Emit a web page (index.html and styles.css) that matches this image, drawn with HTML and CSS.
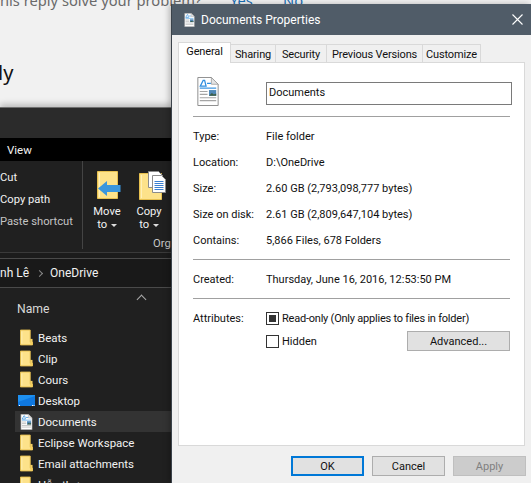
FILE: index.html
```html
<!DOCTYPE html>
<html lang="en">
<head>
<meta charset="utf-8">
<title>Documents Properties</title>
<link rel="stylesheet" href="styles.css">
</head>
<body>
<svg class="defs" width="0" height="0" aria-hidden="true">
  <symbol id="folder" viewBox="0 0 14 17">
    <path d="M.5.5h10.5v13h2.5v3H.5z" fill="#fde28a" stroke="#e7c04f"/>
    <path d="M11 10h2.5v6.500H11z" fill="#f3cf62"/>
    <path d="M2 2v13" stroke="#fff0b8" fill="none"/>
  </symbol>
  <symbol id="doc" viewBox="0 0 22 30">
    <path d="M.5.500h14l7 7v22H.5z" fill="#fff" stroke="#8c8c8c"/>
    <path d="M14.500.500v7h7z" fill="#e4e4e4" stroke="#9a9a9a" stroke-width=".8"/>
    <path d="M3 9.500h6L7.500 3.500H6zM10 6.500h4" fill="none" stroke="#2f8fe0" stroke-width="1.300"/>
    <path d="M2.500 11.500h17" stroke="#2f8fe0" stroke-width="1.200"/>
    <path d="M2.500 15h8M2.500 18h8M2.500 21.500h17M2.500 24.500h17" stroke="#a5a5a5" stroke-width="1.200"/>
    <path d="M12 13.500h7.500v6H12z" fill="#4f88b8"/>
    <path d="M12 19.500l3-3 2 1.500 2.500-1v2.500z" fill="#3e5f46"/>
  </symbol>
</svg>
<main class="desktop">
  <section class="page">
    <p class="question"><span>his reply solve your problem?</span><a class="answer">Yes</a><a class="answer">No</a></p>
    <h1 class="reply-title">ly</h1>
  </section>

  <section class="explorer">
    <div class="ex-title"></div>
    <div class="ex-tabs"><span>View</span></div>
    <div class="ribbon">
      <ul class="clip-actions">
        <li>Cut</li>
        <li>Copy path</li>
        <li class="dim">Paste shortcut</li>
      </ul>
      <div class="organize">
        <div class="big-btn">
          <svg class="move-icon" width="24" height="29" viewBox="0 0 24 29">
            <path d="M.5.500h20v27H.5z" fill="#fde28a" stroke="#e7c04f"/>
            <path d="M2.500 2v24" stroke="#fff0b8"/>
            <path d="M10 10v4h13.500v7H10v4l-9-7.500z" fill="#3a96dd"/>
          </svg>
          <span>Move<br>to <i class="caret"></i></span>
        </div>
        <div class="big-btn">
          <svg class="copy-icon" width="27" height="29" viewBox="0 0 27 29">
            <path d="M.5 2.500h22v26H.5z" fill="#fde28a" stroke="#e7c04f"/>
            <path d="M2.500 4v23" stroke="#fff0b8"/>
            <path d="M9.500.500h10l4 4v12h-14z" fill="#fff" stroke="#8c8c8c"/>
            <path d="M13.500 4.500h9l4 4v13h-13z" fill="#fff" stroke="#8c8c8c"/>
            <path d="M15.500 10.500h9M15.500 12.500h9M15.500 14.500h9M15.500 16.500h9M15.500 18.500h9" stroke="#3a7fd0"/>
          </svg>
          <span>Copy<br>to <i class="caret"></i></span>
        </div>
        <span class="group-label">Org</span>
      </div>
    </div>
    <div class="gap-band"></div>
    <div class="address"><span>nh Lê</span><i class="chev"></i><span>OneDrive</span></div>
    <div class="files">
      <div class="sort-caret"></div>
      <div class="col-name">Name</div>
      <div class="file"><svg class="fi" width="14" height="17"><use href="#folder"/></svg>Beats</div>
      <div class="file"><svg class="fi" width="14" height="17"><use href="#folder"/></svg>Clip</div>
      <div class="file"><svg class="fi" width="14" height="17"><use href="#folder"/></svg>Cours</div>
      <div class="file">
        <svg class="fi fi-wide" width="17" height="12" viewBox="0 0 17 12"><rect width="17" height="11" fill="#1e90f0"/><path d="M0 7l17-6v10H0z" fill="#0f78e0"/><path d="M1 10.500h1M14 10.500h1M15.500 10.500h1" stroke="#fff"/></svg>Desktop
      </div>
      <div class="file selected"><svg class="fi" width="12" height="16"><use href="#doc"/></svg>Documents</div>
      <div class="file"><svg class="fi" width="14" height="17"><use href="#folder"/></svg>Eclipse Workspace</div>
      <div class="file"><svg class="fi" width="14" height="17"><use href="#folder"/></svg>Email attachments</div>
      <div class="file"><svg class="fi" width="14" height="17"><use href="#folder"/></svg>Hỗn thợp</div>
    </div>
  </section>

  <section class="dialog">
    <header class="dlg-title">
      <svg width="11" height="14"><use href="#doc"/></svg>
      <span>Documents Properties</span>
      <svg class="close" width="11" height="11" viewBox="0 0 11 11"><path d="M.5.500l10 10M10.500.500l-10 10" stroke="#fff" stroke-width="1.100"/></svg>
    </header>
    <nav class="tabs">
      <span class="tab active t-general">General</span>
      <span class="tab t-sharing">Sharing</span>
      <span class="tab t-security">Security</span>
      <span class="tab t-prev">Previous Versions</span>
      <span class="tab t-custom">Customize</span>
    </nav>
    <div class="panel">
      <div class="name-row">
        <svg width="22" height="29"><use href="#doc"/></svg>
        <div class="name-input">Documents</div>
      </div>
      <hr class="sep">
      <dl class="facts">
        <dt>Type:</dt><dd>File folder</dd>
        <dt>Location:</dt><dd>D:\OneDrive</dd>
        <dt>Size:</dt><dd>2.60 GB (2,793,098,777 bytes)</dd>
        <dt>Size on disk:</dt><dd>2.61 GB (2,809,647,104 bytes)</dd>
        <dt>Contains:</dt><dd>5,866 Files, 678 Folders</dd>
      </dl>
      <hr class="sep">
      <dl class="facts created">
        <dt>Created:</dt><dd>Thursday, June 16, 2016, 12:53:50 PM</dd>
      </dl>
      <hr class="sep">
      <div class="attrs">
        <span class="attr-label">Attributes:</span>
        <div class="attr-list">
          <label class="check readonly"><i class="box mixed"></i>Read-only (Only applies to files in folder)</label>
          <div class="hidden-row">
            <label class="check"><i class="box"></i>Hidden</label>
            <button class="btn advanced" type="button">Advanced...</button>
          </div>
        </div>
      </div>
    </div>
    <footer class="actions">
      <button class="btn primary" type="button">OK</button>
      <button class="btn" type="button">Cancel</button>
      <button class="btn disabled" type="button">Apply</button>
    </footer>
  </section>
</main>
</body>
</html>
```
FILE: styles.css
```css
* { box-sizing: border-box; }
html, body { margin: 0; padding: 0; height: 100%; overflow: hidden; background: #f1f1f1; }
body { font-family: Roboto, "Noto Sans", sans-serif; }
.defs { position: absolute; }
.desktop { position: relative; width: 531px; height: 483px; overflow: hidden; background: #f1f1f1; }

/* page behind the windows */
.page { height: 108px; }
.question { margin: 0; display: flex; height: 6px; font-family: "Noto Sans", sans-serif; font-size: 14.7px; color: #6a6a6a; white-space: nowrap; }
.question span { width: 230px; line-height: 0; flex: none; }
.question .answer { color: #1a6fb5; line-height: 0; width: 53px; flex: none; }
.reply-title { margin: 55px 0 0 -2px; font: 400 20px/24px "Noto Sans", sans-serif; color: #111; }

/* explorer window */
.explorer { position: absolute; left: 0; top: 107px; width: 172px; height: 376px; background: #202020; color: #f2f2f2; font-size: 11.5px; border-top: 1px solid #6f6f6f; box-shadow: 0 -3px 6px rgba(0,0,0,.22); display: flex; flex-direction: column; overflow: hidden; }
.ex-title { height: 30px; background: #2b2b2b; flex: none; }
.ex-tabs { height: 23px; background: #000; flex: none; padding-left: 7px; line-height: 25px; }
.ribbon { height: 92px; flex: none; display: flex; background: #202020; border-bottom: 1px solid #3a3a3a; font-size: 11.2px; }
.clip-actions { list-style: none; margin: 0 0 3px; padding: 6px 0 0; width: 83px; flex: none; border-right: 1px solid #444; }
.clip-actions li { height: 22px; line-height: 22px; white-space: nowrap; }
.clip-actions .dim { color: #c4c4c4; }
.organize { flex: 1; display: flex; padding: 10px 0 0 3px; position: relative; }
.big-btn { width: 42px; flex: none; display: flex; flex-direction: column; align-items: center; text-align: center; line-height: 13px; }
.big-btn svg { flex: none; margin-bottom: 5px; height: 29px; }
.big-btn .move-icon { margin-left: 3px; }
.big-btn .copy-icon { margin-left: 6px; }
.big-btn span { display: block; }
.caret { display: inline-block; width: 0; height: 0; border: 3px solid transparent; border-top-color: #ddd; border-bottom: 0; vertical-align: middle; margin-left: 1px; }
.group-label { position: absolute; left: 70px; bottom: 2px; color: #c8c8c8; }
.gap-band { height: 6px; flex: none; background: #1c1c1c; border-bottom: 1px solid #4a4a4a; }
.address { height: 29px; flex: none; display: flex; align-items: center; gap: 8px; background: #191919; border-bottom: 1px solid #4a4a4a; font-size: 12px; }
.chev { width: 5px; height: 5px; border-top: 1.500px solid #888; border-right: 1.500px solid #888; transform: rotate(45deg); }
.files { flex: 1; background: #202020; display: flex; flex-direction: column; }
.sort-caret { width: 7px; height: 7px; border-top: 1px solid #aaa; border-left: 1px solid #aaa; transform: rotate(45deg); margin: 8px 0 0 138px; flex: none; }
.col-name { padding-left: 17px; font-size: 12.2px; line-height: 16px; height: 26px; color: #d8d8d8; margin-top: -2px; flex: none; }
.file { height: 21px; flex: none; display: flex; align-items: center; padding-left: 20px; gap: 5px; white-space: nowrap; }
.file .fi { width: 13px; flex: none; }
.file .fi-wide { width: 17px; margin-left: -2px; margin-right: -2px; }
.selected { background: #333; margin-left: 15px; padding-left: 5px; }

/* dialog */
.dialog { position: absolute; left: 171px; top: 4px; width: 360px; height: 479px; background: #f0f0f0; border-left: 1px solid #3b434b; box-shadow: -2px 0 6px rgba(0,0,0,.25); color: #111; font-size: 11px; }
.dlg-title { height: 31px; background: #505c68; color: #fff; display: flex; align-items: center; padding: 0 8px 0 12px; gap: 6px; font-size: 12px; }
.dlg-title svg { flex: none; }
.dlg-title span { flex: 1; }
.tabs { display: flex; align-items: flex-end; height: 27px; padding-left: 6px; letter-spacing: -.15px; }
.tab { height: 18px; line-height: 19px; background: #f0f0f0; border: 1px solid #d9d9d9; border-bottom: 0; border-left: 0; text-align: center; white-space: nowrap; flex: none; }
.tab.active { height: 21px; line-height: 18px; background: #fff; border-left: 1px solid #d9d9d9; position: relative; margin-bottom: -1px; z-index: 1; }
.t-general { width: 53px; }
.t-sharing { width: 45px; }
.t-security { width: 51px; }
.t-prev { width: 96px; }
.t-custom { width: 58px; }
.panel { margin: 0 6px; height: 384px; background: #fff; border: 1px solid #d9d9d9; padding: 19px 14px 0; }
.name-row { display: flex; align-items: center; height: 23px; }
.name-row svg { flex: none; margin: -5px 0 0 4px; }
.name-input { margin-left: 47px; width: 246px; height: 23px; border: 1px solid #7a7a7a; padding-left: 2px; line-height: 19px; flex: none; }
.sep { border: 0; border-top: 1px solid #a0a0a0; margin: 11px 0 0; width: 317px; height: 0; }
.facts { display: grid; grid-template-columns: 73px 1fr; grid-auto-rows: 26px; margin: 6px 0; align-items: center; white-space: nowrap; }
.facts dd, .facts dt { margin: 0; }
.facts.created { margin: 0; grid-auto-rows: 38px; }
.facts + .sep { margin-top: 0; }
.attrs { display: flex; padding-top: 12px; }
.attr-label { width: 73px; flex: none; line-height: 15px; }
.attr-list { flex: 1; display: flex; flex-direction: column; gap: 9px; }
.check { display: flex; align-items: center; gap: 3px; height: 14px; white-space: nowrap; }
.readonly { letter-spacing: -.22px; }
.box { width: 13px; height: 13px; border: 1px solid #333; background: #fff; flex: none; display: flex; padding: 2px; letter-spacing: 0; }
.box.mixed::before { content: ""; flex: 1; background: #333; }
.hidden-row { display: flex; justify-content: space-between; width: 244px; }
.btn { font: inherit; color: #111; width: 73px; height: 20px; padding: 0; background: #e1e1e1; border: 1px solid #adadad; }
.advanced { width: 103px; position: relative; top: -3px; margin-bottom: -6px; }
.actions { display: flex; justify-content: flex-end; gap: 8px; padding: 10px 5px 0 0; }
.primary { border: 2px solid #0078d7; }
.disabled { background: #ccc; border-color: #bfbfbf; color: #808080; }
```
